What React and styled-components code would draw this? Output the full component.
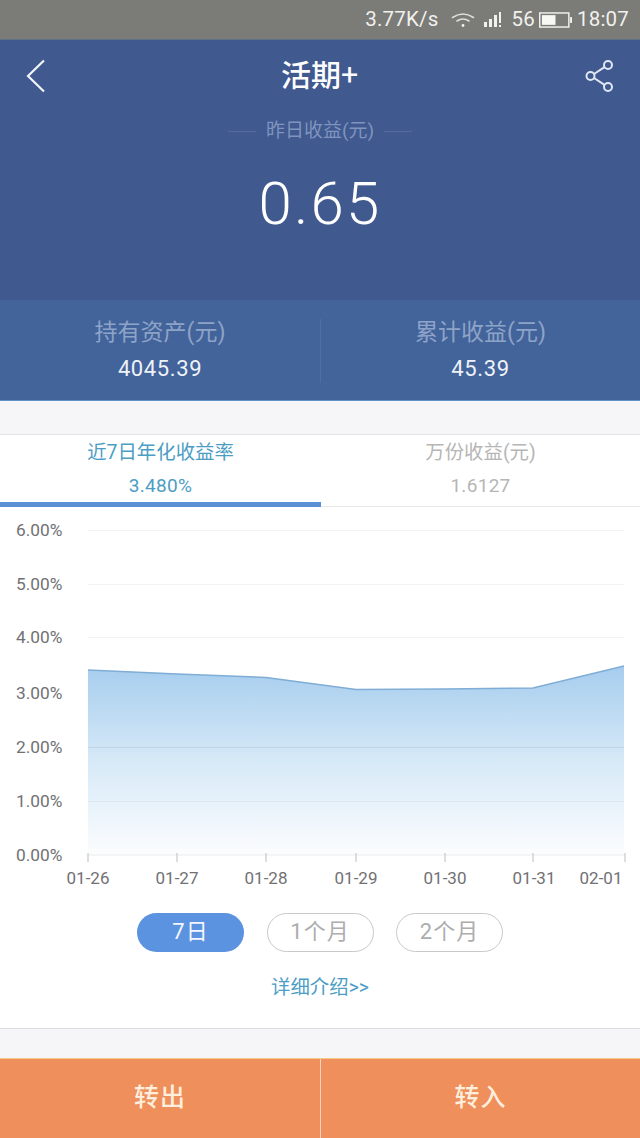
import React from 'react';
import styled, { createGlobalStyle } from 'styled-components';

const Global = createGlobalStyle`
  html, body { margin: 0; padding: 0; background: #f6f5f7; }
  * { box-sizing: border-box; }
  body { font-family: Roboto, "Noto Sans CJK SC", sans-serif; }
`;
const Page = styled.div`width: 640px; height: 1138px; display: flex; flex-direction: column; overflow: hidden; background: #f6f5f7;`;
const StatusBar = styled.div`
  height: 40px; background: #7b7b77; border-bottom: 1px solid #5f7389; color: #f1f1ee; display: flex; align-items: center;
  justify-content: flex-end; padding: 0 11px 0 0; font-size: 20.5px; line-height: 1; letter-spacing: .2px;
`;
const StatusText = styled.span`margin-left: ${p => p.$ml || 0}px;`;
const Icon = styled.svg`display: block; flex: none; margin-left: ${p => p.$ml || 0}px;`;
const Hero = styled.div`height: 260px; background: #40598f; padding-top: 13px; display: flex; flex-direction: column; align-items: center;`;
const Nav = styled.div`width: 100%; height: 46px; display: flex; align-items: center; justify-content: space-between; padding: 0 25px 0 26px;`;
const NavTitle = styled.h1`margin: -6px 0 0 8px; color: #fdfdfd; font-size: 30px; line-height: 46px; font-weight: 500; font-family: "Noto Sans CJK SC", Roboto, sans-serif;`;
const Caption = styled.div`
  margin-top: 19px; display: flex; align-items: center; gap: 10px; color: #7f94bf; font-size: 19px; line-height: 26px;
  &::before, &::after { content: ""; width: 28px; height: 1px; background: #566c9e; }
`;
const BigValue = styled.div`margin-top: 25px; color: #fff; font-size: 60px; line-height: 70px; font-weight: 300; letter-spacing: 2.2px;`;
const Stats = styled.div`height: 101px; background: #43639b; border-bottom: 1px solid #5f93c7; display: grid; grid-template-columns: 321px 319px; align-items: center;`;
const Stat = styled.div`
  height: 64px; margin-top: 2px; display: flex; flex-direction: column; align-items: center; justify-content: space-between;
  border-right: ${p => p.$divider ? '1px solid #4f6ea4' : 'none'};
`;
const StatLabel = styled.div`color: #8ea3c8; font-size: 23px; line-height: 28px;`;
const StatValue = styled.div`color: #eef2f7; font-size: 22px; line-height: 28px; letter-spacing: .6px;`;
const Gap = styled.div`height: ${p => p.$h}px; flex: none; background: #f6f5f7;`;
const Card = styled.div`flex: none; height: 595px; background: #fff; border-top: 1px solid #e4e4e6; border-bottom: 1px solid #dcdce0; display: flex; flex-direction: column;`;
const Tabs = styled.div`height: 72px; display: grid; grid-template-columns: 321px 319px; border-bottom: 1px solid #e8e8e8;`;
const Tab = styled.div`
  display: flex; flex-direction: column; align-items: center; padding-top: 4px; margin-bottom: ${p => p.$active ? '-1px' : 0};
  color: ${p => p.$active ? '#4c9dc4' : '#b6b6b6'}; border-bottom: ${p => p.$active ? '5px solid #5b8fd6' : 'none'};
`;
const TabLabel = styled.div`font-size: 19.4px; line-height: 28px;`;
const TabValue = styled.div`font-size: 19px; line-height: 26px; margin-top: 6px; letter-spacing: .3px;`;
const ChartSvg = styled.svg`display: block; flex: none; width: 640px; height: 391px;`;
const Ranges = styled.div`display: flex; justify-content: center; gap: 22.5px; margin-top: 15px;`;
const Range = styled.div`
  width: 107px; height: 39px; padding-bottom: 8px; border-radius: 20px; display: flex; align-items: center; justify-content: center; font-size: 22px;
  letter-spacing: 1px; background: ${p => p.$active ? '#5b93e0' : '#fff'}; color: ${p => p.$active ? '#f3f7fd' : '#adadad'};
  border: ${p => p.$active ? 'none' : '1.5px solid #c9c9c9'};
`;
const Link = styled.div`margin-top: 22px; text-align: center; color: #4c9dc4; font-size: 19.4px; line-height: 28px;`;
const Footer = styled.div`flex: 1; display: grid; grid-template-columns: 321px 319px; background: #ef8f5b; border-top: 1px solid #f5c98a;`;
const Action = styled.div`
  display: flex; align-items: center; justify-content: center; color: #fdeedd; font-size: 25px; letter-spacing: 1px; font-weight: 500;
  padding-bottom: 7px; border-right: ${p => p.$divider ? '1px solid #f6d3bb' : 'none'};
`;

const ys = [[6, 530], [5, 584], [4, 637], [3, 693], [2, 747], [1, 801], [0, 855]];
const lineY = { 6: 530, 5: 584, 4: 637, 3: 691, 2: 747, 1: 801 };
const xs = [['01-26', 88, 88], ['01-27', 177, 177], ['01-28', 266, 266], ['01-29', 356, 356], ['01-30', 445, 445], ['01-31', 533, 534], ['02-01', 625, 601]];
const pts = [[88, 670], [177, 674], [266, 677.5], [356, 689.5], [445, 689], [533, 688], [624, 666]];
const OFF = 507;
const line = pts.map(([x, y]) => `${x},${y - OFF}`).join(' ');
const area = `88,${855 - OFF} ${line} 624,${855 - OFF}`;

function Chart() {
  return (
    <ChartSvg viewBox="0 0 640 391">
      <defs>
        <linearGradient id="fill" x1="0" y1="0" x2="0" y2="1">
          <stop offset="0" stopColor="#a6cdee" />
          <stop offset=".5" stopColor="#d6e9f7" />
          <stop offset="1" stopColor="#fcfdfe" />
        </linearGradient>
      </defs>
      {Object.values(lineY).map(y => <line key={y} x1="88" x2="624" y1={y - OFF + .5} y2={y - OFF + .5} stroke="#f3f3f3" />)}
      <polygon points={area} fill="url(#fill)" />
      {[747, 801].map(y => <line key={y} x1="88" x2="624" y1={y - OFF + .5} y2={y - OFF + .5} stroke="#a9bccd" strokeOpacity={y === 747 ? .4 : .18} />)}
      <polyline points={line} fill="none" stroke="#7fadd6" strokeWidth="1.5" />
      <line x1="88" x2="624" y1={855 - OFF} y2={855 - OFF} stroke="#ececec" />
      {xs.map(([t, x]) => <line key={t} x1={x} x2={x} y1={853 - OFF} y2={862 - OFF} stroke="#c8c8c8" strokeWidth="1.2" />)}
      <g fontFamily="Roboto, sans-serif" fontSize="17.3" fill="#717174">
        {ys.map(([v, y]) => <text key={v} x="16" y={y - OFF + 6}>{v}.00%</text>)}
        {xs.map(([t, , lx]) => (
          <text key={t} x={lx} y={884 - OFF} fontSize="17" textAnchor="middle">{t}</text>
        ))}
      </g>
    </ChartSvg>
  );
}

export default function App() {
  return (
    <Page>
      <Global />
      <StatusBar>
        <StatusText>3.77K/s</StatusText>
        <Icon $ml={13} width="24" height="16" viewBox="0 0 24 16" fill="none" stroke="#dededb" strokeLinecap="round">
          <path d="M1.5 5.5 Q12 -1.5 22.5 5.5" strokeWidth="1.6" />
          <path d="M6 9 Q12 5 18 9" strokeWidth="1.6" />
          <circle cx="12" cy="13.5" r="1.4" fill="#f1f1ee" stroke="none" />
        </Icon>
        <Icon $ml={9} width="21" height="17" viewBox="0 0 21 17" fill="#f1f1ee">
          <rect x="0" y="11" width="3" height="5" />
          <rect x="5" y="8" width="3" height="8" />
          <rect x="10" y="4" width="3" height="12" />
          <rect x="15" y="1" width="2" height="11" />
          <rect x="15" y="14" width="2" height="2" />
        </Icon>
        <StatusText $ml={6}>56</StatusText>
        <Icon $ml={4} width="33" height="18" viewBox="0 0 34 18" fill="none">
          <rect x=".75" y="1.75" width="30" height="14.5" stroke="#f1f1ee" strokeWidth="1.5" />
          <rect x="3" y="4" width="14" height="10" fill="#f8f8f5" />
          <rect x="32" y="6" width="2" height="6" fill="#f1f1ee" />
        </Icon>
        <StatusText $ml={5}>18:07</StatusText>
      </StatusBar>
      <Hero>
        <Nav>
          <Icon width="20" height="34" viewBox="0 0 20 34" fill="none" stroke="#f2f5fa" strokeWidth="2.2">
            <path d="M18 1.5 L2 17 L18 32.5" />
          </Icon>
          <NavTitle>活期+</NavTitle>
          <Icon width="30" height="34" viewBox="0 0 30 34" fill="none" stroke="#dfe8f5" strokeWidth="2">
            <circle cx="23" cy="6" r="4" />
            <circle cx="5.5" cy="17" r="4" />
            <circle cx="23" cy="28" r="4" />
            <path d="M9 15 L19.5 8.2 M9 19 L19.5 25.8" />
          </Icon>
        </Nav>
        <Caption>昨日收益(元)</Caption>
        <BigValue>0.65</BigValue>
      </Hero>
      <Stats>
        <Stat $divider>
          <StatLabel>持有资产(元)</StatLabel>
          <StatValue>4045.39</StatValue>
        </Stat>
        <Stat>
          <StatLabel>累计收益(元)</StatLabel>
          <StatValue>45.39</StatValue>
        </Stat>
      </Stats>
      <Gap $h={33} />
      <Card>
        <Tabs>
          <Tab $active>
            <TabLabel>近7日年化收益率</TabLabel>
            <TabValue>3.480%</TabValue>
          </Tab>
          <Tab>
            <TabLabel>万份收益(元)</TabLabel>
            <TabValue>1.6127</TabValue>
          </Tab>
        </Tabs>
        <Chart />
        <Ranges>
          <Range $active>7日</Range>
          <Range>1个月</Range>
          <Range>2个月</Range>
        </Ranges>
        <Link>详细介绍&gt;&gt;</Link>
      </Card>
      <Gap $h={29} />
      <Footer>
        <Action $divider>转出</Action>
        <Action>转入</Action>
      </Footer>
    </Page>
  );
}
